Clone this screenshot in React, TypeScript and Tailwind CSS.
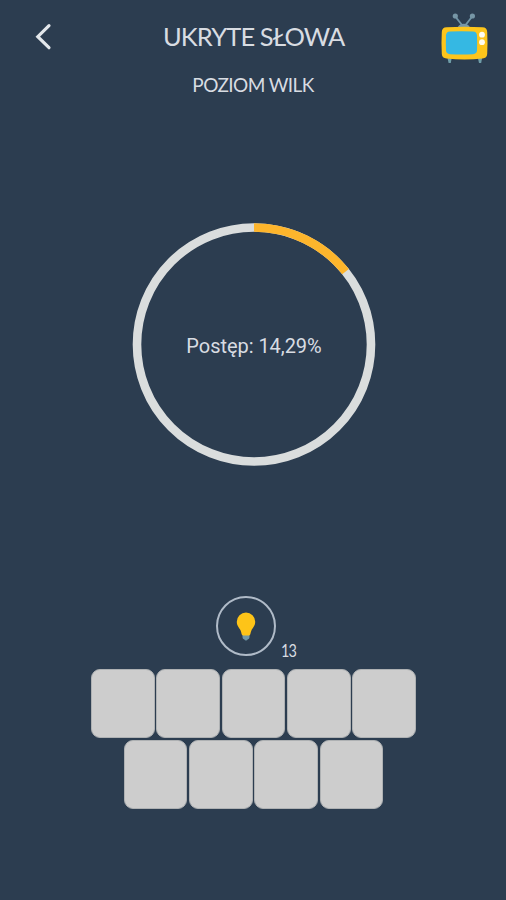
import React from "react";

const RADIUS = 117;
const LENGTH = 2 * Math.PI * RADIUS;

const TvIcon: React.FC = () => (
  <svg width="50" height="54" viewBox="0 0 50 54" fill="none">
    <path d="M15.3 4.5 23.5 15M32.2 4.5 24 15" stroke="#6f93a5" strokeWidth="1.9" />
    <circle cx="15.3" cy="4" r="2.6" fill="#7696a6" />
    <circle cx="32.4" cy="4" r="2.6" fill="#7696a6" />
    <path d="M17.8 16a6 4.2 0 0 1 12 0z" fill="#7696a6" />
    <path d="M7.5 46h4.2l-.9 5H8.6zM37.9 46h4.2l-.9 5H39z" fill="#6f9da8" />
    <path
      d="M6.5 15.3Q24.5 14.3 42.5 15.3 47 15.5 47.2 20 47.8 31 47.2 42 47 46 42.5 46.6 24.5 48.3 6.5 46.6 2 46 1.8 42 1.2 31 1.8 20 2 15.5 6.5 15.3z"
      fill="#fdc51b"
    />
    <path
      d="M10 19.6Q21.5 19 33 19.6 36.8 19.8 37 23.5 37.3 31 37 38.5 36.8 41.8 33 42.2 21.5 43 10 42.2 6.2 41.8 6 38.5 5.7 31 6 23.5 6.2 19.8 10 19.6z"
      fill="#35b8e3"
    />
    <circle cx="42" cy="22.7" r="2.9" fill="#fffdf2" />
    <circle cx="42" cy="30.2" r="2.9" fill="#fffdf2" />
  </svg>
);

const BulbIcon: React.FC = () => (
  <svg width="20" height="30" viewBox="0 0 20 30">
    <path d="M6.5 22h7v3.2q0 1.8-1.9 2.3-.3 1-1.6 1t-1.6-1q-1.9-.5-1.9-2.3z" fill="#6f98a8" />
    <path
      d="M10 .5a9.2 9.2 0 0 1 9.2 9.2c0 4.1-2.4 5.8-3.7 8.6-.9 2-.9 3.3-1.3 4.3-.3.7-.8 1-1.5 1H7.3c-.7 0-1.2-.3-1.5-1-.4-1-.4-2.3-1.3-4.3C3.2 15.5.8 13.8.8 9.7A9.2 9.2 0 0 1 10 .5z"
      fill="#fec418"
    />
  </svg>
);

const ProgressRing: React.FC<{ value: number }> = ({ value }) => (
  <div className="grid h-[244px] w-[244px] place-items-center">
    <svg width="244" height="244" className="col-start-1 row-start-1 -rotate-90">
      <circle cx="121.5" cy="122" r={RADIUS} fill="none" stroke="#dadddd" strokeWidth="8.6" />
      <circle
        cx="121.5"
        cy="122"
        r={RADIUS}
        fill="none"
        stroke="#fdb52c"
        strokeWidth="8.6"
        strokeDasharray={`${(LENGTH * value) / 100} ${LENGTH}`}
      />
    </svg>
    <span className="col-start-1 row-start-1 pt-[3px] font-['Roboto',sans-serif] text-[20px] leading-6 tracking-[-0.05px]">
      Postęp: {value.toFixed(2).replace(".", ",")}%
    </span>
  </div>
);

const TileRow: React.FC<{ count: number }> = ({ count }) => (
  <div className="flex justify-center gap-[1.5px]">
    {Array.from({ length: count }, (_, i) => (
      <div
        key={i}
        className="h-[69px] w-[63.8px] rounded-[9px] border border-[#aeb1b3] bg-[#cdcdcd]"
      />
    ))}
  </div>
);

const App: React.FC = () => {
  return (
    <main className="flex h-[900px] w-[506px] flex-col overflow-hidden bg-[#2c3d50] font-['Lato',sans-serif] text-[#d8dce2]">
      <header className="flex h-[68px] items-start pt-[12px] pr-[16px] pl-[33px]">
        <button className="mt-[10px]" aria-label="back">
          <svg width="20" height="30" viewBox="0 0 20 30" fill="none">
            <path
              d="M16 3.7 4.8 14.7 16 25.7"
              stroke="#e3e7eb"
              strokeWidth="3.2"
              strokeLinecap="round"
            />
          </svg>
        </button>
        <h1 className="mt-[8px] ml-[110px] flex-1 text-[25.5px] leading-8 tracking-[-0.9px] whitespace-nowrap">
          UKRYTE SŁOWA
        </h1>
        <TvIcon />
      </header>
      <h2 className="mt-[5px] text-center text-[19px] leading-6 tracking-[-0.6px]">
        POZIOM WILK
      </h2>

      <section className="mt-[125px] flex justify-center pl-[2px]">
        <ProgressRing value={14.29} />
      </section>

      <section className="mt-[130px] flex h-[73px] items-start pl-[216px]">
        <button
          className="flex h-[60px] w-[60px] items-center justify-center rounded-full border-2 border-[#b0bbc8] pt-[2px]"
          aria-label="hint"
        >
          <BulbIcon />
        </button>
        <span className="mt-[45px] ml-[5px] origin-left scale-x-[0.85] text-[17px] leading-5 tracking-[-1px]">
          13
        </span>
      </section>

      <section className="flex flex-col gap-[2px] pl-[1px]">
        <TileRow count={5} />
        <TileRow count={4} />
      </section>
    </main>
  );
};

export default App;
